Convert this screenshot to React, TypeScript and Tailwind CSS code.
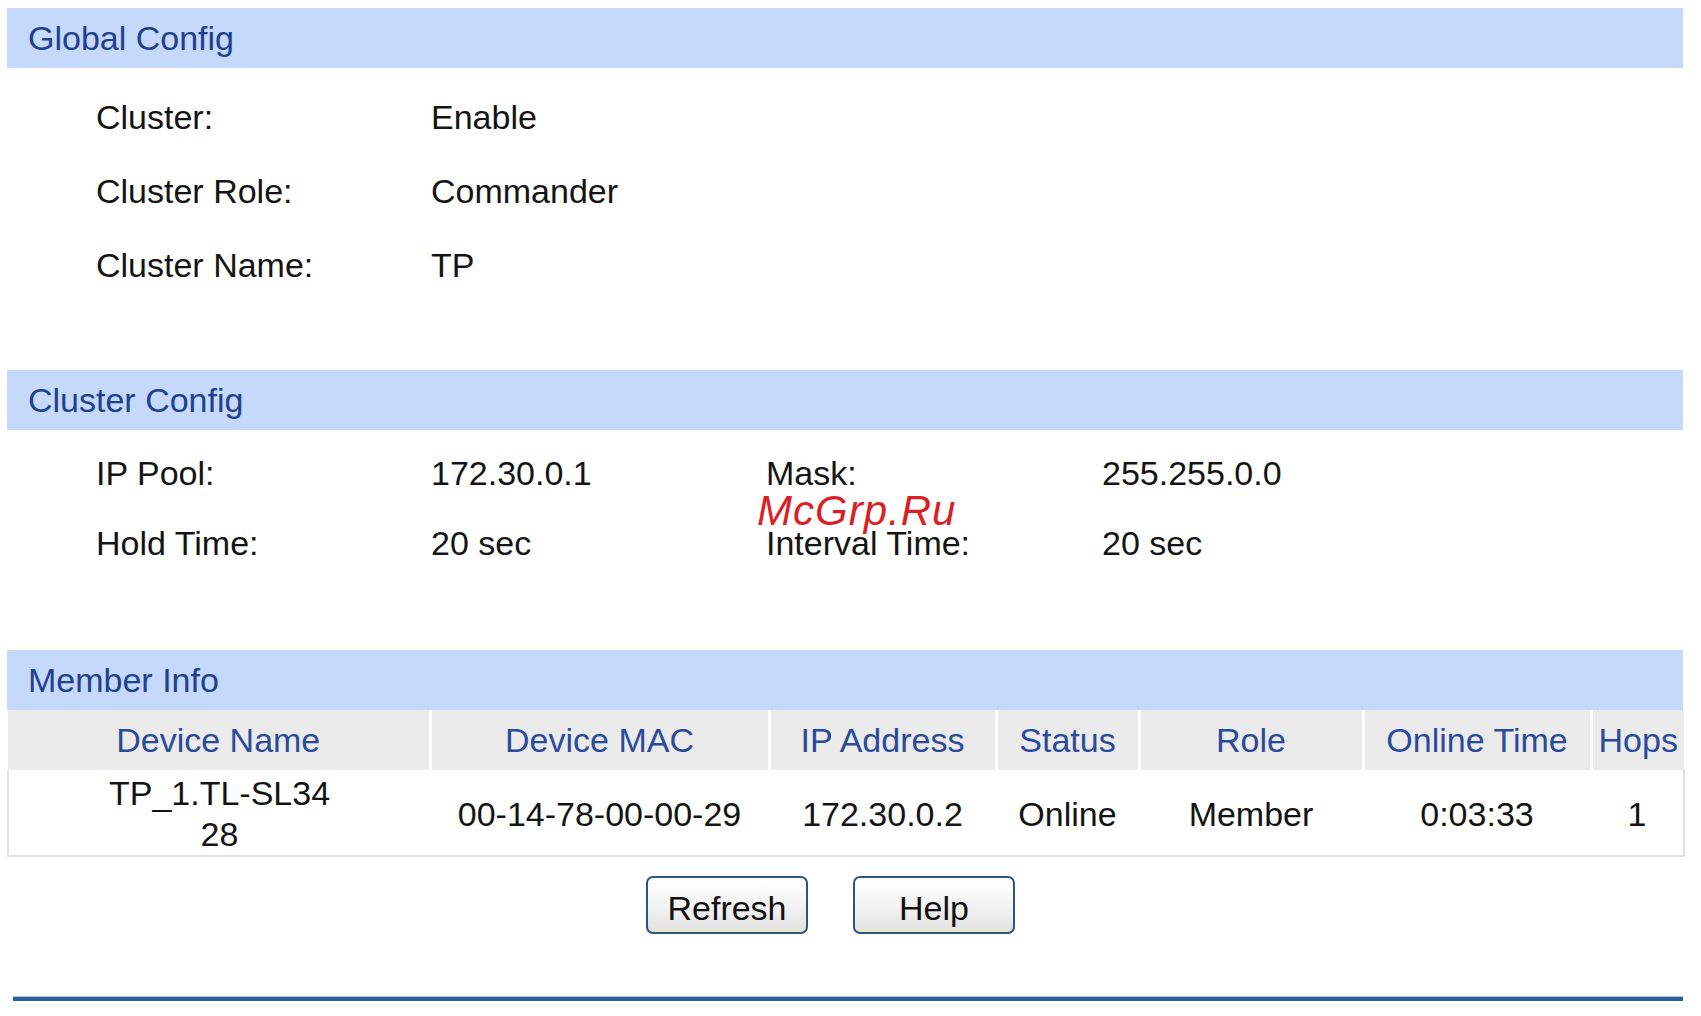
import React from "react";

function SectionBar({ title }: { title: string }) {
  return (
    <div className="h-[60px] w-[1676px] bg-[#c5d9fc] flex items-center pl-[21px] text-[#21408e]">
      {title}
    </div>
  );
}

function InfoRow({
  h,
  cells,
}: {
  h: string;
  cells: string[];
}) {
  return (
    <div className={`flex items-center ${h}`}>
      <div className="w-[89px] shrink-0" />
      <div className="w-[335px] shrink-0">{cells[0]}</div>
      <div className="w-[335px] shrink-0">{cells[1]}</div>
      {cells[2] !== undefined && <div className="w-[336px] shrink-0">{cells[2]}</div>}
      {cells[3] !== undefined && <div className="shrink-0">{cells[3]}</div>}
    </div>
  );
}

const cols = [
  { w: "w-[422px]", t: "Device Name" },
  { w: "w-[339px]", t: "Device MAC" },
  { w: "w-[227px]", t: "IP Address" },
  { w: "w-[143px]", t: "Status" },
  { w: "w-[224px]", t: "Role" },
  { w: "w-[228px]", t: "Online Time" },
  { w: "w-[93px]", t: "Hops" },
];

function Btn({ label }: { label: string }) {
  return (
    <button className="w-[162px] h-[58px] rounded-[7px] border-2 border-[#2a5686] bg-gradient-to-b from-[#ffffff] via-[#f3f3f3] to-[#e2e2e2] text-[34px] text-[#111] leading-none flex items-center justify-center pt-[6px] shadow-[inset_0_-4px_0_-2px_#efe6b8]">
      {label}
    </button>
  );
}

export default function App() {
  return (
    <div className="relative w-[1701px] h-[1016px] bg-white overflow-hidden font-['Liberation_Sans',Arial,sans-serif] text-[34px] leading-tight text-[#141414]">
      <div className="pt-[8px] pl-[7px]">
        <SectionBar title="Global Config" />
        <div className="mt-[12px]">
          <InfoRow h="h-[74px]" cells={["Cluster:", "Enable"]} />
          <InfoRow h="h-[74px]" cells={["Cluster Role:", "Commander"]} />
          <InfoRow h="h-[74px]" cells={["Cluster Name:", "TP"]} />
        </div>

        <div className="mt-[68px]">
          <SectionBar title="Cluster Config" />
        </div>
        <div className="mt-[8px]">
          <InfoRow h="h-[70px]" cells={["IP Pool:", "172.30.0.1", "Mask:", "255.255.0.0"]} />
          <InfoRow h="h-[70px]" cells={["Hold Time:", "20 sec", "Interval Time:", "20 sec"]} />
        </div>

        <div className="mt-[72px]">
          <SectionBar title="Member Info" />
        </div>
        <table className="table-fixed border-collapse w-[1676px]">
          <thead>
            <tr className="h-[60px]">
              {cols.map((c, i) => (
                <th
                  key={c.t}
                  className={`${c.w} bg-[#ebebeb] font-normal text-center text-[#2a4b9b] whitespace-nowrap p-0 ${
                    i < cols.length - 1 ? "border-r-[3px] border-white" : ""
                  }`}
                >
                  {c.t}
                </th>
              ))}
            </tr>
          </thead>
          <tbody>
            <tr className="h-[86px] border-2 border-t-0 border-[#e0e0e0]">
              <td className="text-center p-0 leading-[41px] pt-[2px]">
                TP_1.TL-SL34
                <br />
                28
              </td>
              <td className="text-center p-0 pt-[4px]">00-14-78-00-00-29</td>
              <td className="text-center p-0 pt-[4px]">172.30.0.2</td>
              <td className="text-center p-0 pt-[4px]">Online</td>
              <td className="text-center p-0 pt-[4px]">Member</td>
              <td className="text-center p-0 pt-[4px]">0:03:33</td>
              <td className="text-center p-0 pt-[4px]">1</td>
            </tr>
          </tbody>
        </table>

        <div className="mt-[19px] flex gap-[45px] pl-[639px]">
          <Btn label="Refresh" />
          <Btn label="Help" />
        </div>

        <div className="mt-[62px] ml-[6px] w-[1670px] border-t border-[#a8c4de] h-[5px] bg-[#2d6394]" />
      </div>

      <div className="absolute left-[757px] top-[490px] italic text-[42px] leading-none tracking-[1px] text-[#dc1f26]">
        McGrp.Ru
      </div>
    </div>
  );
}
